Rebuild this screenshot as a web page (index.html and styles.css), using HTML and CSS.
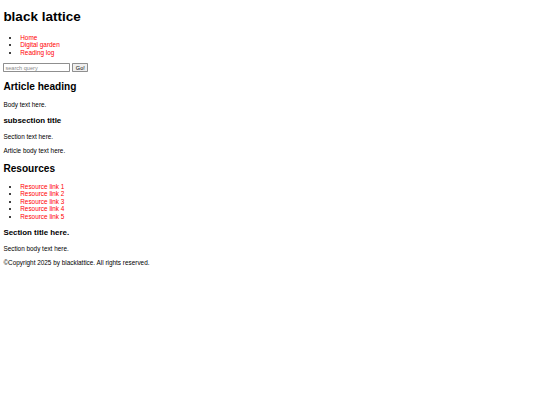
FILE: index.html
```html
<!DOCTYPE html>
<html>
<head>
<meta charset="utf-8">
<title>black lattice</title>
<link rel="stylesheet" href="styles.css">
</head>
<body class="page">
<header class="site-header">
<h1 class="site-title">black lattice</h1>
<nav class="site-nav">
<ul class="list">
<li><a class="link" href="#">Home</a></li>
<li><a class="link" href="#">Digital garden</a></li>
<li><a class="link" href="#">Reading log</a></li>
</ul>
</nav>
<form class="search">
<input class="search-input" type="text" placeholder="search query">
<button class="search-btn" type="button">Go!</button>
</form>
</header>
<main class="content">
<article class="article">
<h2 class="heading">Article heading</h2>
<p class="text">Body text here.</p>
<section class="section">
<h3 class="subheading">subsection title</h3>
<p class="text">Section text here.</p>
</section>
<p class="text">Article body text here.</p>
</article>
<section class="resources">
<h2 class="heading">Resources</h2>
<ul class="list">
<li><a class="link" href="#">Resource link 1</a></li>
<li><a class="link" href="#">Resource link 2</a></li>
<li><a class="link" href="#">Resource link 3</a></li>
<li><a class="link" href="#">Resource link 4</a></li>
<li><a class="link" href="#">Resource link 5</a></li>
</ul>
</section>
<section class="section">
<h3 class="subheading">Section title here.</h3>
<p class="text">Section body text here.</p>
</section>
</main>
<footer class="site-footer">
<p class="text">©Copyright 2025 by blacklattice. All rights reserved.</p>
</footer>
</body>
</html>
```
FILE: styles.css
```css
.page {
  margin: 3.375px;
  font-family: "Liberation Sans", Arial, sans-serif;
  font-size: 6.4px;
  line-height: 7.5px;
  color: #000;
  background: #fff;
}
.site-title {
  font-size: 13.5px;
  line-height: 15.5px;
  font-weight: bold;
  margin: 6px 0 9.05px;
}
.heading {
  font-size: 10.125px;
  line-height: 11.6px;
  font-weight: bold;
  margin: 8.4px 0;
}
.subheading {
  font-size: 7.9px;
  line-height: 9px;
  font-weight: bold;
  margin: 7.9px 0;
}
.text {
  margin: 6.75px 0;
}
.list {
  margin: 6.75px 0;
  padding-left: 16.875px;
}
.link {
  color: red;
  text-decoration: none;
}
.search {
  margin: 0;
  display: flex;
  align-items: center;
  gap: 2px;
}
.search-input {
  box-sizing: border-box;
  width: 67px;
  height: 8.4px;
  padding: 0 1px;
  border: 0.8px solid #8f8f8f;
  border-radius: 0.8px;
  font-family: "Liberation Sans", Arial, sans-serif;
  font-size: 5.6px;
  color: #000;
  background: #fff;
}
.search-input::placeholder {
  color: #8a8a8a;
}
.search-btn {
  box-sizing: border-box;
  width: 16px;
  height: 9px;
  padding: 0;
  border: 0.8px solid #8f8f8f;
  border-radius: 0.8px;
  background: #efefef;
  font-family: "Liberation Sans", Arial, sans-serif;
  font-size: 5.6px;
  color: #000;
}
```
